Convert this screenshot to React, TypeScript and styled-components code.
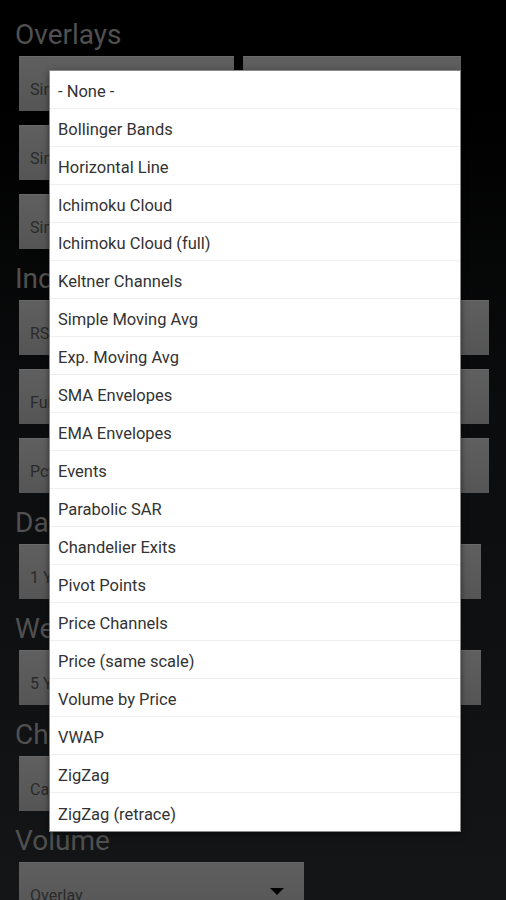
import React from "react";
import styled, { createGlobalStyle } from "styled-components";

const GlobalStyle = createGlobalStyle`
  html, body {
    margin: 0;
    padding: 0;
    background: #000;
  }
  * {
    box-sizing: border-box;
  }
`;

const Screen = styled.div`
  position: relative;
  width: 506px;
  height: 900px;
  overflow: hidden;
  padding: 19px 0 0 15px;
  background: linear-gradient(to bottom, #000 12%, #0b0c0d 45%, #131517 100%);
  font-family: Roboto, "Liberation Sans", sans-serif;
`;

const Heading = styled.div`
  font-size: 28px;
  line-height: 32px;
  color: #505050;
  margin: 14px 0 5px;

  &:first-child {
    margin-top: 0;
  }
`;

const Rows = styled.div`
  display: flex;
  flex-direction: column;
  gap: 14px;
  margin-left: 4px;
`;

const Row = styled.div`
  display: flex;
  gap: 9px;
`;

const Select = styled.div<{ $width: number }>`
  position: relative;
  display: flex;
  align-items: center;
  width: ${(p) => p.$width}px;
  height: 55px;
  padding: 10px 11px 0;
  background: linear-gradient(to bottom, #5f5f5f, #555);
  border-top: 1px solid #686868;
  color: #2a2a2a;
  font-size: 16px;
  white-space: nowrap;
  overflow: hidden;
`;

const Arrow = styled.span`
  position: absolute;
  right: 20px;
  top: 25px;
  width: 0;
  height: 0;
  border-left: 7px solid transparent;
  border-right: 7px solid transparent;
  border-top: 7px solid #000;
`;

const Menu = styled.ul`
  position: absolute;
  left: 49px;
  top: 70px;
  width: 412px;
  margin: 0;
  padding: 0;
  list-style: none;
  background: #fff;
  border: 1px solid #8a8a8a;
  box-shadow: 0 2px 6px rgba(0, 0, 0, 0.5);
`;

const MenuItem = styled.li`
  display: flex;
  align-items: center;
  height: 38px;
  padding: 4px 0 0 8px;
  border-bottom: 1px solid #efefef;
  color: #333;
  font-size: 16.5px;

  &:last-child {
    border-bottom: none;
  }
`;

const options = [
  "- None -",
  "Bollinger Bands",
  "Horizontal Line",
  "Ichimoku Cloud",
  "Ichimoku Cloud (full)",
  "Keltner Channels",
  "Simple Moving Avg",
  "Exp. Moving Avg",
  "SMA Envelopes",
  "EMA Envelopes",
  "Events",
  "Parabolic SAR",
  "Chandelier Exits",
  "Pivot Points",
  "Price Channels",
  "Price (same scale)",
  "Volume by Price",
  "VWAP",
  "ZigZag",
  "ZigZag (retrace)",
];

const App = () => {
  return (
    <>
      <GlobalStyle />
      <Screen>
        <Heading>Overlays</Heading>
        <Rows>
          <Row>
            <Select $width={215}>Simple Moving Avg</Select>
            <Select $width={218}>None</Select>
          </Row>
          <Row>
            <Select $width={215}>Simple Moving Avg</Select>
            <Select $width={218}>None</Select>
          </Row>
          <Row>
            <Select $width={215}>Simple Moving Avg</Select>
            <Select $width={218}>None</Select>
          </Row>
        </Rows>

        <Heading>Indicators</Heading>
        <Rows>
          <Select $width={470}>RSI</Select>
          <Select $width={470}>Full Stochastics</Select>
          <Select $width={470}>Pct. Price Osc.</Select>
        </Rows>

        <Heading>Daily</Heading>
        <Rows>
          <Select $width={462}>1 Year</Select>
        </Rows>

        <Heading>Weekly</Heading>
        <Rows>
          <Select $width={462}>5 Years</Select>
        </Rows>

        <Heading>Chart Type</Heading>
        <Rows>
          <Select $width={380}>Candlesticks</Select>
        </Rows>

        <Heading>Volume</Heading>
        <Rows>
          <Select $width={285}>
            Overlay
            <Arrow />
          </Select>
        </Rows>

        <Menu>
          {options.map((o) => (
            <MenuItem key={o}>{o}</MenuItem>
          ))}
        </Menu>
      </Screen>
    </>
  );
};

export default App;
